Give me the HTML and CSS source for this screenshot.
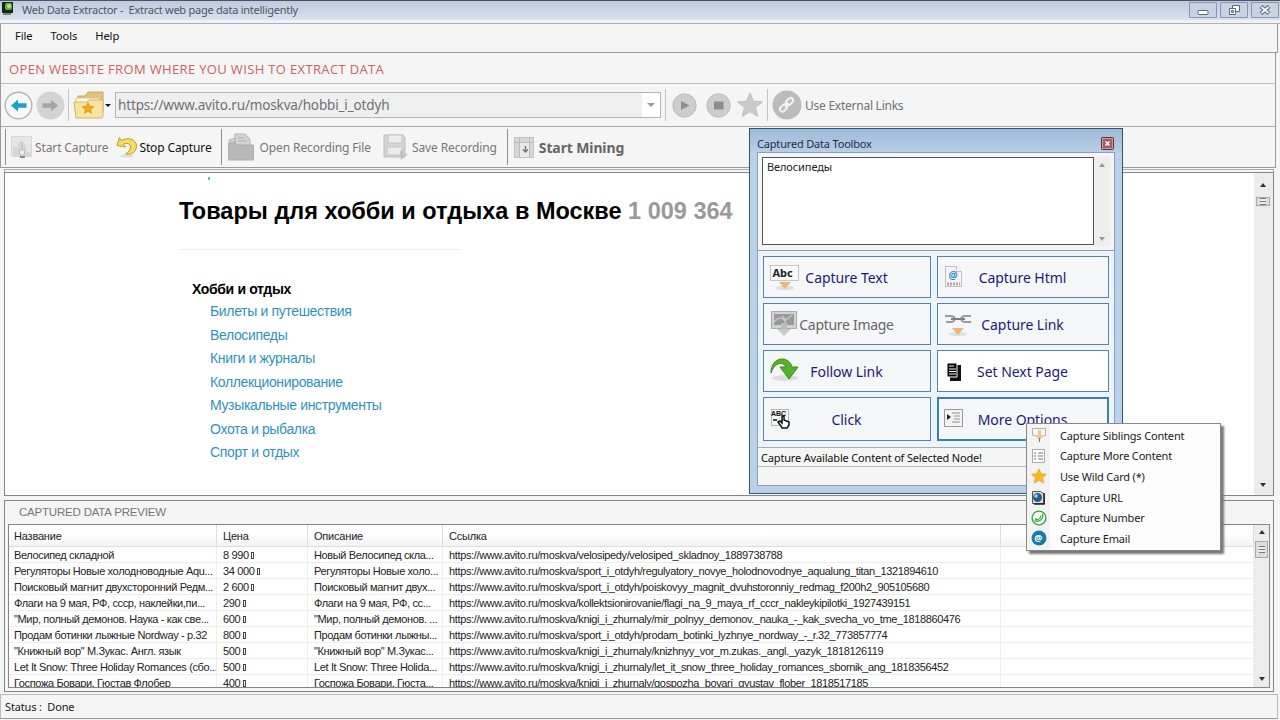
FILE: index.html
```html
<!DOCTYPE html>
<html lang="en">
<head>
  <meta charset="UTF-8" />
  <meta name="viewport" content="width=device-width, initial-scale=1.0" />
  <title>Web Data Extractor</title>
  <link rel="stylesheet" href="styles.css">
</head>
<body>
<div class="window">
  <header class="titlebar">
    <svg class="app-icon" width="12" height="13" viewBox="0 0 12 13"><rect x="0" y="0" width="11" height="11" fill="#15251a"/><rect x="3" y="1" width="7" height="7" rx="2" fill="#6fae3c"/><circle cx="7" cy="4" r="2" fill="#b4e080"/><path d="M1 12h8" stroke="#222"/></svg>
    <span class="title">Web Data Extractor -&nbsp; Extract web page data intelligently</span>
    <div class="win-buttons">
      <span class="win-btn"><svg width="12" height="12" viewBox="0 0 12 12"><rect x="1" y="6.500" width="10" height="4" rx="1" fill="#fff" stroke="#59677a"/></svg></span>
      <span class="win-btn"><svg width="12" height="12" viewBox="0 0 12 12"><path d="M4.500 1.500h7v6h-7z" fill="#fff" stroke="#59677a"/><path d="M1.500 4.500h6v6h-6z" fill="#fff" stroke="#59677a"/><path d="M3.500 6.500h2v2h-2z" fill="#bbc8d8" stroke="#59677a"/></svg></span>
      <span class="win-btn"><svg width="12" height="12" viewBox="0 0 12 12"><path d="M2 2.500l8 7M10 2.500l-8 7" stroke="#59677a" stroke-width="4"/><path d="M2.500 3l7 6M9.500 3l-7 6" stroke="#fff" stroke-width="1.800"/></svg></span>
    </div>
  </header>

  <nav class="menubar">
    <span class="m-file">File</span><span class="m-tools">Tools</span><span class="m-help">Help</span>
  </nav>

  <div class="banner"><span>OPEN WEBSITE FROM WHERE YOU WISH TO EXTRACT DATA</span></div>

  <div class="navbar">
    <svg width="29" height="29" viewBox="0 0 29 29"><circle cx="14.500" cy="14.500" r="13.300" fill="#f8f8f8" stroke="#b5b5b5" stroke-width="1.400"/><path d="M7 14.500l7-6v3.700h8.500v4.600H14v3.700z" fill="#1d9fd0"/></svg>
    <svg class="forward" width="29" height="29" viewBox="0 0 29 29"><circle cx="14.500" cy="14.500" r="14" fill="#d3d3d3"/><path d="M22 14.500l-7-6v3.700H6.500v4.600H15v3.700z" fill="#a5a5a5"/></svg>
    <i class="vline v1"></i>
    <svg class="folder" width="32" height="28" viewBox="0 0 32 28"><path d="M12 5l3-4h15v20H5V5z" fill="#e4c27a" stroke="#cba85a"/><path d="M3 7h24v6H3z" fill="#fffbe8" stroke="#d8c48d"/><path d="M1 11h13l2-2h14v16q0 2-2 2H3z" fill="#f6e3a0" stroke="#d2b565"/><path d="M15 11.500l1.700 3.800 4.100.4-3.100 2.700.9 4-3.600-2.100-3.600 2.100.9-4-3.100-2.700 4.100-.4z" fill="#f0aa12" stroke="#c88a08" stroke-width=".6"/></svg>
    <i class="drop"></i>
    <div class="address"><span>https://www.avito.ru/moskva/hobbi_i_otdyh</span><b><i></i></b></div>
    <i class="vline v2"></i>
    <svg class="play" width="25" height="25" viewBox="0 0 25 25"><circle cx="12.500" cy="12.500" r="11.700" fill="#cdcdcd" stroke="#bcbcbc"/><path d="M9 8l8.500 4.500L9 17z" fill="#8e8e8e"/></svg>
    <svg class="stop" width="25" height="25" viewBox="0 0 25 25"><circle cx="12.500" cy="12.500" r="11.700" fill="#cdcdcd" stroke="#bcbcbc"/><path d="M8 8.500h9.500v8H8z" fill="#8e8e8e"/></svg>
    <svg class="fav" width="26" height="26" viewBox="0 0 26 26"><path d="M13 1l3.400 8.200 8.900.7-6.800 5.700 2.200 8.700L13 19.600l-7.700 4.700 2.200-8.700L.7 9.900l8.900-.7z" fill="#cacaca" stroke="#bdbdbd"/></svg>
    <i class="vline v3"></i>
    <svg class="chain" width="30" height="30" viewBox="0 0 30 30"><circle cx="15" cy="15" r="14.500" fill="#bbb"/><g fill="none" stroke="#f2f2f2" stroke-width="2"><rect x="13.500" y="9" width="8" height="5" rx="2.500" transform="rotate(-45 17.500 11.500)"/><rect x="7.500" y="15.500" width="8" height="5" rx="2.500" transform="rotate(-45 11.500 18)"/><path d="M13 17l3.500-4"/></g></svg>
    <span class="external">Use External Links</span>
  </div>

  <div class="toolbar">
    <i class="tline t1"></i>
    <svg class="i-start" width="22" height="23" viewBox="0 0 22 23"><rect x=".5" y=".5" width="20" height="20" fill="#e6e6e6" stroke="#d8d8d8"/><path d="M2 11h5V8l4-3 4 4v7h5v5H2z" fill="#d6d6d6"/><path d="M11 6v8m-3 0h6l-1 5H9z" fill="#f0f0f0" stroke="#bbb"/><path d="M9 21h5" stroke="#888" stroke-width="2"/></svg>
    <span class="s-start">Start Capture</span>
    <svg class="i-undo" width="22" height="22" viewBox="0 0 22 22"><ellipse cx="11" cy="20" rx="7" ry="1.500" fill="#dedede"/><path d="M3.500 1.500L1 9.500l8.500 1.500-2.200-2.800c3-1.700 7.200-.7 7.200 2.800 0 3-2 5-5 7 6 1.500 11-2.500 11-8C20.500 3.500 12.500.5 5.300 4.500z" fill="#f7dc6a" stroke="#c19c26"/></svg>
    <span class="s-stop">Stop Capture</span>
    <i class="tline t2"></i>
    <svg class="i-open" width="27" height="28" viewBox="0 0 27 28"><path d="M1 7l6-2v4h-6zM7 1h10l5 5v9H7z" fill="#d4d4d4" stroke="#b4b4b4"/><path d="M10 5h6M10 8h9" stroke="#b0b0b0"/><path d="M.5 10h7l2 2h16v15H.5z" fill="#b8b8b8" stroke="#adadad"/></svg>
    <span class="s-open">Open Recording File</span>
    <svg class="i-save" width="27" height="27" viewBox="0 0 27 27"><path d="M1 1h19l2 3v19H1z" fill="#d5d5d5" stroke="#bdbdbd"/><path d="M5 1h14v8H5zM4 13h16v8H4z" fill="#ececec" stroke="#c4c4c4"/><path d="M17 17l3-3v6h5l-7 6z" fill="#c2c2c2"/></svg>
    <span class="s-save">Save Recording</span>
    <i class="tline t3"></i>
    <svg class="i-mine" width="20" height="21" viewBox="0 0 20 21"><path d="M.5.500h19v20H.5z" fill="#d7d7d7" stroke="#c3c3c3"/><path d="M.5 5.500h19M5.500.500v20M15.500.500v20" stroke="#bcbcbc"/><path d="M6 6h9v14H6z" fill="#eaeaea"/><path d="M11.500 9v6m-2.500-2.500l2.500 2.500 2.500-2.500" fill="none" stroke="#777" stroke-width="1.500"/></svg>
    <span class="s-mine">Start Mining</span>
  </div>

  <main class="browser">
    <article>
      <div class="speck"></div>
      <h1>Товары для хобби и отдыха в Москве <span>1 009 364</span></h1>
      <hr>
      <h2>Хобби и отдых</h2>
      <ul>
        <li>Билеты и путешествия</li>
        <li>Велосипеды</li>
        <li>Книги и журналы</li>
        <li>Коллекционирование</li>
        <li>Музыкальные инструменты</li>
        <li>Охота и рыбалка</li>
        <li>Спорт и отдых</li>
      </ul>
    </article>
    <div class="scroll"><i class="up"></i><i class="thumb"></i><i class="down"></i></div>
  </main>

  <section class="preview">
    <h3>CAPTURED DATA PREVIEW</h3>
    <div class="grid-box">
      <div class="grid">
        <div class="row head"><span>Название</span><span>Цена</span><span>Описание</span><span>Ссылка</span><span></span></div>
        <div class="row"><span>Велосипед складной</span><span>8 990 <i class="box"></i></span><span>Новый Велосипед скла...</span><span>https://www.avito.ru/moskva/velosipedy/velosiped_skladnoy_1889738788</span><span></span></div>
        <div class="row"><span>Регуляторы Новые холодноводные Aqu...</span><span>34 000 <i class="box"></i></span><span>Регуляторы Новые холо...</span><span>https://www.avito.ru/moskva/sport_i_otdyh/regulyatory_novye_holodnovodnye_aqualung_titan_1321894610</span><span></span></div>
        <div class="row"><span>Поисковый магнит двухсторонний Редм...</span><span>2 600 <i class="box"></i></span><span>Поисковый магнит двух...</span><span>https://www.avito.ru/moskva/sport_i_otdyh/poiskovyy_magnit_dvuhstoronniy_redmag_f200h2_905105680</span><span></span></div>
        <div class="row"><span>Флаги на 9 мая, РФ, ссср, наклейки,пи...</span><span>290 <i class="box"></i></span><span>Флаги на 9 мая, РФ, сс...</span><span>https://www.avito.ru/moskva/kollektsionirovanie/flagi_na_9_maya_rf_cccr_nakleykipilotki_1927439151</span><span></span></div>
        <div class="row"><span>"Мир, полный демонов. Наука - как све...</span><span>600 <i class="box"></i></span><span>"Мир, полный демонов. ...</span><span>https://www.avito.ru/moskva/knigi_i_zhurnaly/mir_polnyy_demonov._nauka_-_kak_svecha_vo_tme_1818860476</span><span></span></div>
        <div class="row"><span>Продам ботинки лыжные Nordway - р.32</span><span>800 <i class="box"></i></span><span>Продам ботинки лыжны...</span><span>https://www.avito.ru/moskva/sport_i_otdyh/prodam_botinki_lyzhnye_nordway_-_r.32_773857774</span><span></span></div>
        <div class="row"><span>"Книжный вор" М.Зукас. Англ. язык</span><span>500 <i class="box"></i></span><span>"Книжный вор" М.Зукас...</span><span>https://www.avito.ru/moskva/knigi_i_zhurnaly/knizhnyy_vor_m.zukas._angl._yazyk_1818126119</span><span></span></div>
        <div class="row"><span>Let It Snow: Three Holiday Romances (сбо...</span><span>500 <i class="box"></i></span><span>Let It Snow: Three Holida...</span><span>https://www.avito.ru/moskva/knigi_i_zhurnaly/let_it_snow_three_holiday_romances_sbornik_ang_1818356452</span><span></span></div>
        <div class="row"><span>Госпожа Бовари, Гюстав Флобер</span><span>400 <i class="box"></i></span><span>Госпожа Бовари, Гюста...</span><span>https://www.avito.ru/moskva/knigi_i_zhurnaly/gospozha_bovari_gyustav_flober_1818517185</span><span></span></div>
      </div>
      <div class="scroll"><i class="up"></i><i class="thumb"></i><i class="down"></i></div>
    </div>
  </section>

  <footer><span>Status :&nbsp; Done</span></footer>
</div>

<!-- floating toolbox -->
<div class="toolbox">
  <div class="tb-title"><span>Captured Data Toolbox</span><svg width="13" height="13" viewBox="0 0 13 13"><rect x=".5" y=".5" width="12" height="12" rx="1" fill="#a85a62" stroke="#642a34"/><rect x="1.500" y="1.500" width="10" height="10" fill="none" stroke="#d09a9e"/><path d="M4.500 4.500l4 4M8.500 4.500l-4 4" stroke="#fff" stroke-width="1.600"/></svg></div>
  <div class="tb-body">
    <div class="tb-text"><div class="tb-area">Велосипеды</div><div class="tb-scroll"><i class="up"></i><i class="down"></i></div></div>
    <div class="tb-buttons">
      <div class="btn"><svg width="32" height="30" viewBox="0 0 32 30"><rect x="1.500" y="3.500" width="28" height="15" fill="#fafafa" stroke="#c4c4c4"/><text x="3.500" y="15" class="abc">Abc</text><ellipse cx="16" cy="26" rx="9" ry="2" fill="#ddd"/><path d="M10 20h12l-6 7z" fill="#eeb573"/></svg><span>Capture Text</span></div>
      <div class="btn"><svg width="32" height="30" viewBox="0 0 32 30"><path d="M2.500 4.500h11l5 5v15h-16z" fill="#f5f5f5" stroke="#c0c0c0"/><path d="M13.500 4.500v5h5" fill="#fff" stroke="#c0c0c0"/><text x="5.500" y="17" class="at">@</text><path d="M4 22h13" stroke="#b5a8ae" stroke-width="3" stroke-dasharray="2 1"/></svg><span>Capture Html</span></div>
      <div class="btn off"><svg width="32" height="30" viewBox="0 0 32 30"><path d="M2.500 2.500h25v17h-25z" fill="#d2d2d2" stroke="#aaa"/><path d="M5 5h20v11H5z" fill="#999"/><path d="M5 13c4-5 8-5 11-1l2 4M13 7l4 4 6-5" fill="none" stroke="#c4c4c4" stroke-width="1.500"/><path d="M8 20h14l-7 7z" fill="#c9c9c9"/><path d="M12 14h6v7h-6z" fill="#bdbdbd"/></svg><span>Capture Image</span></div>
      <div class="btn"><svg width="32" height="30" viewBox="0 0 32 30"><g fill="none" stroke="#9b9b9b" stroke-width="2"><path d="M2 7h6q3 0 4 3-1 3-4 3H3M28 7h-6q-3 0-4 3 1 3 4 3h6"/><path d="M8 10h14" stroke="#7f7f7f"/></g><ellipse cx="15" cy="25" rx="9" ry="2" fill="#dedede"/><path d="M9 19h12l-6 7z" fill="#eeb573"/></svg><span>Capture Link</span></div>
      <div class="btn"><svg width="32" height="30" viewBox="0 0 32 30"><ellipse cx="16" cy="22" rx="13" ry="3" fill="#ddd"/><path d="M2 17C2 0 20-1 23 11h6l-9 12-9-12h6C15 6 6 5 2 17z" fill="#54b228" stroke="#378b18"/></svg><span>Follow Link</span></div>
      <div class="btn white"><svg width="32" height="30" viewBox="0 0 32 30"><path d="M7 9h11v16H7z" fill="#111"/><path d="M4 7h10v14H4z" fill="#000" stroke="#fff"/><path d="M6 10h5M6 13h7M6 15.500h7M6 18h7" stroke="#fff"/></svg><span>Set Next Page</span></div>
      <div class="btn"><svg width="32" height="30" viewBox="0 0 32 30"><path d="M2.500 5.500h17v16h-17z" fill="none" stroke="#777" stroke-dasharray="1 1"/><text x="2" y="12" class="tiny">ABC</text><path d="M4 16h4M12 22l-3-4 2-1 2 2v-7h2v4l5 2v3l-2 3h-5z" fill="#fff" stroke="#111" stroke-width="1.500"/></svg><span>Click</span></div>
      <div class="btn hot"><svg width="32" height="30" viewBox="0 0 32 30"><path d="M.5 5.500h18v17H.5z" fill="#f4f4f4" stroke="#999"/><path d="M8 9h8M10 12h6M10 15h6M8 18h8" stroke="#8d8d8d"/><path d="M3 10l4 3-4 3z" fill="#222"/></svg><span>More Options</span></div>
    </div>
    <div class="tb-status">Capture Available Content of Selected Node!</div>
  </div>
</div>

<!-- "More Options" menu -->
<div class="popup">
  <div class="item"><svg width="16" height="16" viewBox="0 0 16 16"><path d="M1.500 1.500h13v7h-13z" fill="#f7f7f7" stroke="#b0b0b0"/><path d="M7 3h3v5h4l-5.500 5L3 8h4z" fill="#ecc79a"/><path d="M8.500 11v4" stroke="#777"/></svg><span>Capture Siblings Content</span></div>
  <div class="item"><svg width="16" height="16" viewBox="0 0 16 16"><path d="M1.500 1.500h12v13h-12z" fill="#fff" stroke="#aaa"/><path d="M3 5h2m2 0h5M3 8h2m2 0h5M3 11h2m2 0h5" stroke="#777"/></svg><span>Capture More Content</span></div>
  <div class="item"><svg width="16" height="16" viewBox="0 0 16 16"><path d="M8 .8l2.200 4.900 5.300.5-4 3.600 1.200 5.300L8 12.300l-4.700 2.800 1.200-5.300-4-3.600 5.300-.5z" fill="#fbb91c" stroke="#e59512" stroke-width=".6"/></svg><span>Use Wild Card (*)</span></div>
  <div class="item"><svg width="16" height="16" viewBox="0 0 16 16"><path d="M1.500 2.500h8l4 3v9h-12z" fill="#d7dde2" stroke="#555"/><path d="M13 4v11H3" fill="none" stroke="#222" stroke-width="1.500"/><circle cx="6.500" cy="8.500" r="4.500" fill="#245f83"/><circle cx="5" cy="7" r="1.800" fill="#a9cfe0"/></svg><span>Capture URL</span></div>
  <div class="item"><svg width="16" height="16" viewBox="0 0 16 16"><circle cx="8" cy="8" r="6.900" fill="#fff" stroke="#27aa32" stroke-width="1.400"/><path d="M11.500 4c1.500 5-4 9-8 6.500M4 8.500c1.500 2 5.500 1 6-3" fill="none" stroke="#27b334" stroke-width="1.300"/></svg><span>Capture Number</span></div>
  <div class="item"><svg width="16" height="16" viewBox="0 0 16 16"><circle cx="8" cy="8" r="7.500" fill="#1b7ba6"/><text x="3.200" y="11.200" class="mail">@</text></svg><span>Capture Email</span></div>
</div>
</body>
</html>
```
FILE: styles.css
```css
:root {
  --panel: #f5f5f5;
  --line: #999;
  --navy: #1c1b74;
  --btn-border: #5883a8;
  --ui: "Noto Sans", "Open Sans", sans-serif;
}

* { box-sizing: border-box; margin: 0; padding: 0; }

body {
  width: 1280px;
  height: 720px;
  overflow: hidden;
  position: relative;
  font-family: var(--ui);
  font-size: 11px;
  color: #222;
  background: var(--panel);
}

svg { display: block; flex: none; }
span { white-space: nowrap; }

.window { height: 720px; display: flex; flex-direction: column; }

/* title bar */
.titlebar {
  height: 24px;
  display: flex;
  align-items: flex-start;
  background: linear-gradient(#bccbdd, #d8e3ee 85%, #eef2f6 88%);
  border-top: 1px solid #4a5468;
  border-bottom: 1px solid #b0b0b0;
}
.app-icon { margin: 1px 8px 0 2px; }
.title { color: #4b5768; font-size: 11px; line-height: 18px; letter-spacing: -0.25px; }
.win-buttons { margin-left: auto; display: flex; gap: 3px; padding: 1px 1px 0 0; }
.win-btn {
  width: 28px;
  height: 16px;
  display: grid;
  place-items: center;
  border: 1px solid #8796ae;
  border-radius: 1px;
  background: #c6d3e3;
}

/* bars */
.menubar, .banner, .navbar, .toolbar {
  display: flex;
  align-items: center;
  margin-right: 4px;
  border-left: 1px solid var(--line);
  border-right: 1px solid var(--line);
}
.menubar { height: 29px; margin-right: 2px; border-bottom: 1px solid var(--line); padding: 0 0 5px 14px; font-size: 11.2px; color: #111; letter-spacing: -0.1px; }
.m-tools { margin-left: 18px; }
.m-help { margin-left: 18px; }
.banner { height: 31px; border-bottom: 1px solid #bbb; padding: 2px 0 0 8px; }
.banner span { color: #cf6064; font-family: "Open Sans", sans-serif; font-size: 13px; letter-spacing: 0.35px; }

.navbar { height: 43px; border-bottom: 1px solid #aaa; padding-left: 3px; }
.forward { margin-left: 3px; }
.vline { width: 1px; height: 32px; background: #c4c4c4; }
.v1 { margin: 0 4px 0 3px; }
.drop { width: 0; height: 0; border: 3px solid transparent; border-top-color: #111; border-bottom: 0; margin: 0 4px 0 0; }
.address {
  width: 546px;
  height: 26px;
  display: flex;
  align-items: center;
  justify-content: space-between;
  padding-left: 2px;
  border: 1px solid #b5b5b5;
  background: #efefef;
}
.address span { font-size: 13.5px; color: #717171; letter-spacing: -0.15px; }
.address b { width: 18px; height: 24px; background: #fff; display: grid; place-items: center; }
.address i { border: 4px solid transparent; border-top-color: #999; border-bottom: 0; }
.v2 { margin: 0 6px 0 4px; }
.stop { margin-left: 9px; }
.fav { margin-left: 6px; }
.v3 { margin: 0 4px 0 4px; }
.external { margin-left: 3px; color: #737373; font-size: 12px; letter-spacing: -0.25px; }

.toolbar { height: 41px; border-bottom: 1px solid #999; font-size: 12px; letter-spacing: -0.12px; color: #777; }
.tline { width: 1px; height: 36px; background: #8f8f8f; }
.t1 { margin: 0 5px 0 4px; }
.s-start { margin: 0 8px 0 2px; }
.s-stop { color: #111; margin-left: 1px; }
.t2 { margin: 0 6px 0 9px; }
.s-open { margin: 0 12px 0 5px; }
.s-save { margin-left: 2px; }
.t3 { margin: 0 6px 0 10px; }
.s-mine { margin-left: 5px; font-size: 14px; font-weight: bold; color: #666; }

/* page inside the browser */
.browser {
  height: 324px;
  margin: 4px 6px 0 4px;
  display: flex;
  border: 1px solid #858585;
  box-shadow: 0 -3px 0 -1px #f5f5f5, 0 -3px 0 0 #aaa;
  background: #fff;
  font-family: "Liberation Sans", Arial, sans-serif;
}
article { flex: 1; padding-left: 174px; }
.speck { width: 2px; height: 3px; margin: 4px 0 0 29px; background: #6ab7dc; }
h1 { margin-top: 15px; font-size: 23.5px; line-height: 32px; color: #000; }
h1 span { color: #999; }
hr { width: 282px; border: 0; border-top: 1px solid #eee; margin-top: 22px; }
h2 { margin: 30px 0 0 13px; font-size: 14px; letter-spacing: -0.35px; line-height: 18px; color: #000; }
ul { list-style: none; margin: 2px 0 0 31px; }
li { height: 23.5px; line-height: 23.5px; font-size: 14px; letter-spacing: -0.35px; color: #2f93bd; }

/* scroll bars */
.scroll {
  width: 19px;
  display: flex;
  flex-direction: column;
  align-items: center;
  background: #ececec;
  padding: 10px 2px 8px 0;
}
.up, .down { width: 0; height: 0; border: 3px solid transparent; }
.up { border-top: 0; border-bottom: 4px solid #333; }
.down { border-bottom: 0; border-top: 4px solid #333; margin-top: auto; }
.thumb {
  width: 14px;
  height: 9px;
  margin-top: 10px;
  border: 1px solid #aaa;
  background: repeating-linear-gradient(#777 0 1px, #eee 1px 3px) center / 6px 7px no-repeat, #ddd;
}

/* data preview */
.preview {
  height: 192px;
  margin: 4px 6px 0 4px;
  border: 1px solid #858585;
  padding: 0 3px 0 3px;
}
h3 { font: 11.5px/23px "Liberation Sans", Arial, sans-serif; color: #777; padding-left: 11px; letter-spacing: -0.2px; }
.grid-box { height: 164px; display: flex; border: 1px solid #858585; background: #fff; overflow: hidden; }
.grid { flex: 1; height: 162px; overflow: hidden; font: 11px/17px "Liberation Sans", Arial, sans-serif; color: #222; }
.row { display: grid; grid-template-columns: 208px 91px 135px 558px 1fr; height: 16px; }
.row span { padding-left: 6px; border-right: 1px solid #eee; border-bottom: 1px solid #ededed; overflow: hidden; letter-spacing: -0.36px; }
.row span:first-child { padding-left: 5px; }
.row.head { height: 22px; line-height: 22px; background: linear-gradient(#fff 40%, #f1f2f4); }
.row.head span { border-color: #ddd; letter-spacing: -0.2px; }
.box { display: inline-block; width: 3px; height: 7px; border: 1px solid #444; }
.grid-box .scroll { width: 15px; padding: 5px 0 6px; }
.grid-box .thumb { height: 17px; width: 13px; margin-top: 7px; }

footer {
  height: 25px;
  margin: 2px 2px 0 0;
  padding: 4px 0 0 4px;
  border: 1px solid #bbb;
  border-bottom-color: var(--line);
  letter-spacing: -0.15px;
}

/* floating toolbox */
.toolbox {
  position: absolute;
  left: 749px;
  top: 128px;
  width: 374px;
  height: 366px;
  display: flex;
  flex-direction: column;
  padding: 0 7px 7px;
  border: 1px solid #31566f;
  background: linear-gradient(#9ebad7, #b9d1ea 25px);
}
.tb-title { height: 23px; display: flex; align-items: center; justify-content: space-between; padding: 5px 0 0; }
.tb-title svg { margin-right: 1px; }
.tb-title span { font-size: 11px; letter-spacing: -0.18px; color: #1f2d42; }
.tb-body { flex: 1; display: flex; flex-direction: column; border: 1px solid #8ca0b4; background: var(--panel); }
.tb-text { height: 98px; display: flex; padding: 4px; border-bottom: 1px solid #999; }
.tb-area { width: 332px; height: 88px; border: 1px solid #555; background: #fff; padding: 1px 4px; color: #222; letter-spacing: -0.1px; }
.tb-scroll { flex: 1; display: flex; flex-direction: column; align-items: center; background: #eee; padding: 6px 0 5px; }
.tb-scroll .up { border-bottom-color: #999; }
.tb-scroll .down { border-top-color: #999; }
.tb-buttons {
  height: 196px;
  display: grid;
  grid-template-columns: 168px 172px;
  grid-template-rows: 42px 42px 42px 44px;
  gap: 5px 6px;
  padding: 5px;
  background: #eaf4fa;
}
.btn { display: grid; align-items: center; border: 1px solid var(--btn-border); background: #f5f6f8; color: var(--navy); }
.btn svg, .btn span { grid-area: 1 / 1; }
.btn svg { margin-left: 5px; }
.btn span { text-align: center; font-size: 14px; letter-spacing: -0.05px; padding-right: 1px; }
.btn.off span { color: #666; letter-spacing: -0.3px; }
.btn.white { background: #fff; }
.btn.hot { border: 2px solid #3c7fb1; }
.abc { font: bold 11px var(--ui); fill: #222; }
.at { font: bold 10px var(--ui); fill: #2a90cf; }
.tiny { font: bold 7px "Liberation Sans", sans-serif; fill: #111; }
.mail { font: bold 9px var(--ui); fill: #fff; }
.tb-status { height: 20px; line-height: 20px; padding-left: 3px; border-top: 1px solid #aaa; border-bottom: 1px solid #bbb; letter-spacing: -0.17px; color: #111; white-space: nowrap; }

/* popup menu */
.popup {
  position: absolute;
  left: 1026px;
  top: 423px;
  width: 195px;
  height: 128px;
  padding: 1px 0 0 4px;
  border: 1px solid #888;
  background: linear-gradient(90deg, #f3f3f3 23px, #fcfcfc 23px);
  box-shadow: 3px 3px 2px #777;
}
.item { height: 20.6px; display: flex; align-items: center; letter-spacing: -0.17px; color: #222; }
.item span { margin-left: 13px; }
```
